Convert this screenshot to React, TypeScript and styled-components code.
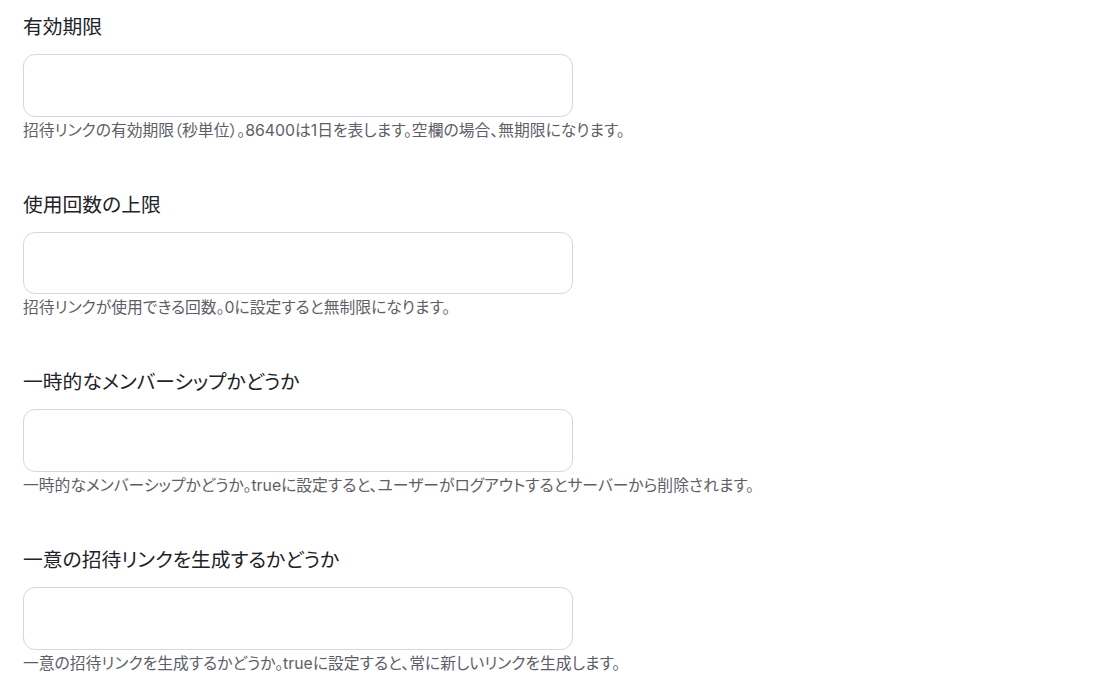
import React from "react";
import styled, { createGlobalStyle } from "styled-components";

const Global = createGlobalStyle`
  html, body { margin: 0; padding: 0; background: #ffffff; }
  body { font-family: Inter, "Noto Sans CJK JP", sans-serif; }
`;

const Page = styled.div`
  display: flex;
  flex-direction: column;
  gap: 51.2px;
  padding: 14px 23px 0 23px;
`;

const Field = styled.div`
  display: flex;
  flex-direction: column;
`;

const Label = styled.label`
  font-size: 19.8px;
  line-height: 27px;
  font-weight: 400;
  color: #22222a;
  margin-bottom: 13px;
  font-feature-settings: "palt";
`;

const Input = styled.input`
  box-sizing: border-box;
  width: 550px;
  height: 62.5px;
  border: 1px solid #d6d6de;
  border-radius: 12px;
  background: #fff;
  padding: 0 14px;
  font-size: 16px;
  font-family: inherit;
  outline: none;
`;

const Help = styled.p`
  margin: 4px 0 0 0;
  font-size: 15.8px;
  line-height: 20px;
  color: #5e5e68;
  font-feature-settings: "palt";
`;

const fields = [
  {
    label: "有効期限",
    help: "招待リンクの有効期限（秒単位）。86400は1日を表します。空欄の場合、無期限になります。",
  },
  {
    label: "使用回数の上限",
    help: "招待リンクが使用できる回数。0に設定すると無制限になります。",
  },
  {
    label: "一時的なメンバーシップかどうか",
    help: "一時的なメンバーシップかどうか。trueに設定すると、ユーザーがログアウトするとサーバーから削除されます。",
  },
  {
    label: "一意の招待リンクを生成するかどうか",
    help: "一意の招待リンクを生成するかどうか。trueに設定すると、常に新しいリンクを生成します。",
  },
];

export default function App() {
  return (
    <>
      <Global />
      <Page>
        {fields.map((f) => (
          <Field key={f.label}>
            <Label>{f.label}</Label>
            <Input type="text" />
            <Help>{f.help}</Help>
          </Field>
        ))}
      </Page>
    </>
  );
}
